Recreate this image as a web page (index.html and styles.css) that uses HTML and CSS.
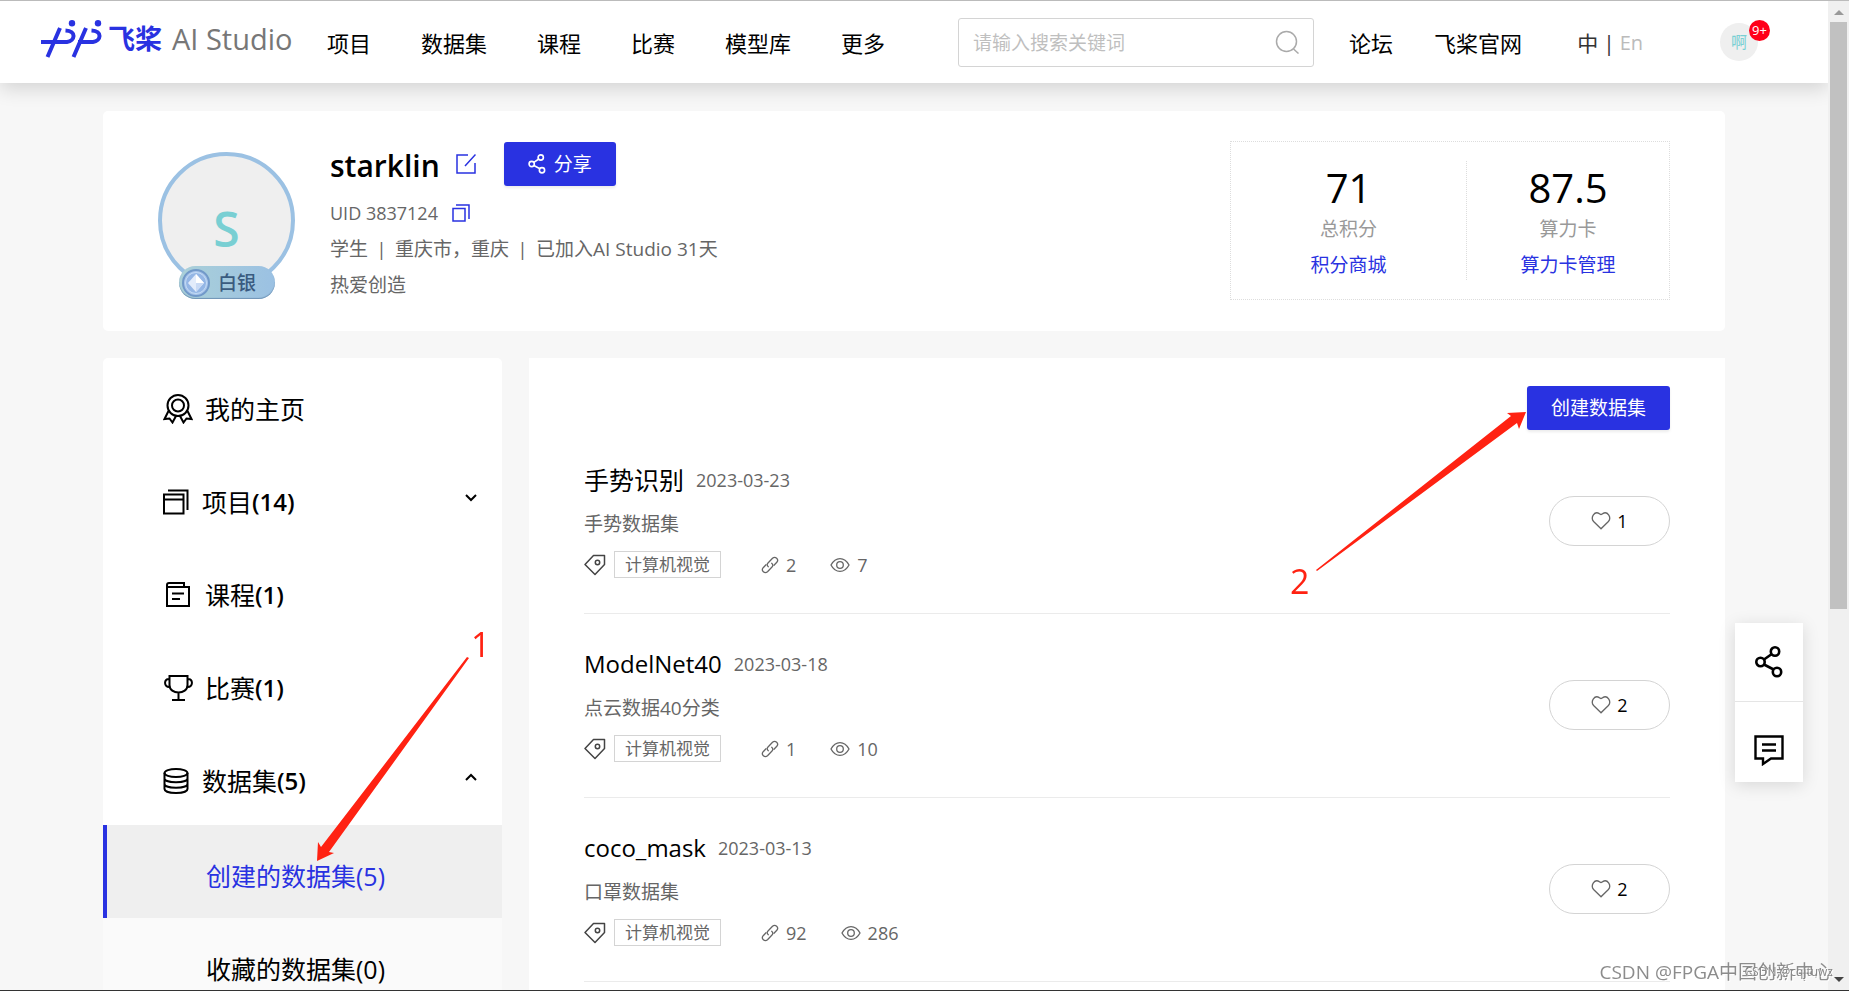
FILE: index.html
```html
<!DOCTYPE html>
<html lang="zh-CN">
<head>
<meta charset="utf-8">
<title>飞桨 AI Studio</title>
<link rel="stylesheet" href="styles.css">
</head>
<body>
<svg class="sprite" aria-hidden="true">
  <symbol id="i-share" viewBox="0 0 28 32"><g fill="none" stroke="currentColor" stroke-width="2.6"><circle cx="5.500" cy="16" r="4.200"/><circle cx="20" cy="5.500" r="4.200"/><circle cx="22" cy="26" r="4.200"/><path d="M9 13.500 16.800 8M9 18.500l9.700 5"/></g></symbol>
  <symbol id="i-tag" viewBox="0 0 22 22"><g fill="none" stroke="currentColor" stroke-width="1.500"><path d="M1 10.500 9.500 1.500H20.500v9L11 20.500Z" stroke-linejoin="round"/><circle cx="13.500" cy="8.500" r="2.200"/></g></symbol>
  <symbol id="i-link" viewBox="0 0 18 18"><g fill="none" stroke="currentColor" stroke-width="1.300" stroke-linecap="round"><path d="M7.300 10.700C5.800 9.500 6 8 7 7l4.500-4.700c2.800-2.500 6.800 1 4.300 4L13 9.200"/><path d="M10.700 7.300c1.500 1.200 1.300 2.700.3 3.700l-4.500 4.700c-2.800 2.500-6.800-1-4.300-4L5 8.800"/></g></symbol>
  <symbol id="i-eye" viewBox="0 0 20 16"><g fill="none" stroke="currentColor" stroke-width="1.300"><path d="M1 8c4.500-8.600 13.500-8.600 18 0-4.500 8.600-13.500 8.600-18 0Z"/><circle cx="10" cy="8" r="3.300"/></g></symbol>
  <symbol id="i-heart" viewBox="0 0 20 18"><path d="M10 16.800 2.600 9.500C-.8 5.500 3.500-1.300 8.300 1.600 9 2 9.500 2.500 10 2.500s1-.5 1.700-.9c4.800-2.900 9.100 3.900 5.700 7.900Z" fill="none" stroke="currentColor" stroke-width="1.300"/></symbol>
</svg>

<header class="topbar">
  <a class="logo" href="#">
    <svg class="logo-mark" viewBox="0 0 62 38" aria-hidden="true"><g fill="none" stroke="currentColor" stroke-width="4"><path d="M19 8 6.500 37M45 8 32.500 37"/><path d="M0 22H26C34 21 36 11 24.500 10.500M37 22H52C60 21 62 11 50.500 10.500"/></g><circle cx="31" cy="3.200" r="3.200" fill="currentColor"/><circle cx="57" cy="3.200" r="3.200" fill="currentColor"/></svg>
    <span class="logo-cn">飞桨</span>
    <span class="logo-en">AI Studio</span>
  </a>
  <nav class="nav">
    <a href="#">项目</a><a href="#">数据集</a><a href="#">课程</a><a href="#">比赛</a><a href="#">模型库</a><a href="#">更多</a>
  </nav>
  <form class="search">
    <input type="text" placeholder="请输入搜索关键词" aria-label="搜索">
    <button type="button" aria-label="搜索"><svg viewBox="0 0 24 24"><g fill="none" stroke="currentColor" stroke-width="1.500"><circle cx="11.500" cy="11.500" r="10"/><path d="m18.500 19 5 4.500"/></g></svg></button>
  </form>
  <nav class="nav2"><a href="#">论坛</a><a href="#">飞桨官网</a></nav>
  <div class="lang"><a href="#">中</a><span>|</span><a href="#" class="off">En</a></div>
  <a class="user" href="#">啊<span class="badge">9+</span></a>
</header>

<main class="page">
  <section class="profile">
    <div class="avatar">
      <span class="avatar-letter">S</span>
      <span class="rank">
        <svg viewBox="0 0 30 30" aria-hidden="true"><circle cx="15" cy="15" r="13" fill="#a9c4ea" stroke="#7199c9" stroke-width="2"/><circle cx="15" cy="15" r="10.500" fill="#94b6e5" stroke="#c4dcf5"/><path d="m15 6 8 9-8 9-8-9Z" fill="#e3ecfb"/><path d="m15 6 8 9h-8Z" fill="#fff"/><path d="m15 24 8-9h-8Z" fill="#c9daf5"/></svg>
        白银</span>
    </div>
    <div class="info">
      <div class="name-row">
        <h1>starklin</h1>
        <button class="icon-btn" type="button" aria-label="编辑"><svg class="edit" viewBox="0 0 20 20"><path d="M12 1H1v18h18V9M9 12 19.500.5" fill="none" stroke="currentColor" stroke-width="1.500"/></svg></button>
        <button class="btn share" type="button"><svg><use href="#i-share"/></svg>分享</button>
      </div>
      <p>UID 3837124 <button class="icon-btn" type="button" aria-label="复制"><svg class="copy" viewBox="0 0 18 18"><path d="M1 4.500h12V17H1ZM4 1h13v14" fill="none" stroke="currentColor" stroke-width="1.500"/></svg></button></p>
      <p><span>学生</span><i>|</i><span>重庆市，重庆</span><i>|</i><span>已加入AI Studio 31天</span></p>
      <p>热爱创造</p>
    </div>
    <div class="stats">
      <div class="stat wide"><strong>71</strong><span>总积分</span><a href="#">积分商城</a></div>
      <div class="stat"><strong>87.5</strong><span>算力卡</span><a href="#">算力卡管理</a></div>
    </div>
  </section>

  <div class="columns">
    <aside class="side">
      <a class="item" href="#"><svg viewBox="0 0 30 30"><g fill="none" stroke="currentColor" stroke-width="2"><circle cx="15" cy="11.500" r="10.500"/><circle cx="15" cy="11.500" r="6"/><path d="M5.500 17 1.500 25l5-.5 3 4 3.500-6.500M24.500 17l4 8-5-.5-3 4L17 22"/></g></svg>我的主页</a>
      <a class="item group" href="#"><svg viewBox="0 0 26 26"><path d="M1 5.500h19.500V24.500H1ZM1 10.500h19.500M5 1.500h19.500v19.500" fill="none" stroke="currentColor" stroke-width="2"/></svg>项目<b>(14)</b><svg class="chev" viewBox="0 0 12 8"><path d="m1 1 5 5 5-5" fill="none" stroke="currentColor" stroke-width="2"/></svg></a>
      <a class="item" href="#"><svg viewBox="0 0 30 30"><path d="M4 7v19h22V7H4V5q0-2 2-2h15v4M9 13.500h12M9 19h8" fill="none" stroke="currentColor" stroke-width="2"/></svg>课程<b>(1)</b></a>
      <a class="item" href="#"><svg viewBox="0 0 30 30"><path d="M6.500 3h18v9c0 10-18 10-18 0ZM6.500 6C.5 5 .5 15 7 14M24.500 6c6-1 6 9-.5 8M15.500 20v6M9 27h13" fill="none" stroke="currentColor" stroke-width="2"/></svg>比赛<b>(1)</b></a>
      <a class="item group" href="#"><svg viewBox="0 0 26 26"><g fill="none" stroke="currentColor" stroke-width="2"><ellipse cx="13" cy="5" rx="11.500" ry="4"/><path d="M1.500 5v16c0 5.300 23 5.300 23 0V5M1.500 10.500c0 5 23 5 23 0M1.500 16c0 5 23 5 23 0"/></g></svg>数据集<b>(5)</b><svg class="chev" viewBox="0 0 12 8"><path d="m1 7 5-5 5 5" fill="none" stroke="currentColor" stroke-width="2"/></svg></a>
      <a class="sub active" href="#">创建的数据集(5)</a>
      <a class="sub" href="#">收藏的数据集(0)</a>
    </aside>

    <section class="list">
      <div class="toolbar"><button class="btn" type="button">创建数据集</button></div>
      <article class="row">
        <div><h2><a href="#">手势识别</a><time>2023-03-23</time></h2><p>手势数据集</p>
          <div class="meta"><svg class="tag-i"><use href="#i-tag"/></svg><span class="tag">计算机视觉</span><span class="num"><svg class="link-i"><use href="#i-link"/></svg>2</span><span class="num"><svg class="eye-i"><use href="#i-eye"/></svg>7</span></div></div>
        <button class="like" type="button"><svg><use href="#i-heart"/></svg>1</button>
      </article>
      <article class="row">
        <div><h2><a class="latin" href="#">ModelNet40</a><time>2023-03-18</time></h2><p>点云数据40分类</p>
          <div class="meta"><svg class="tag-i"><use href="#i-tag"/></svg><span class="tag">计算机视觉</span><span class="num"><svg class="link-i"><use href="#i-link"/></svg>1</span><span class="num"><svg class="eye-i"><use href="#i-eye"/></svg>10</span></div></div>
        <button class="like" type="button"><svg><use href="#i-heart"/></svg>2</button>
      </article>
      <article class="row">
        <div><h2><a class="latin" href="#">coco_mask</a><time>2023-03-13</time></h2><p>口罩数据集</p>
          <div class="meta"><svg class="tag-i"><use href="#i-tag"/></svg><span class="tag">计算机视觉</span><span class="num"><svg class="link-i"><use href="#i-link"/></svg>92</span><span class="num"><svg class="eye-i"><use href="#i-eye"/></svg>286</span></div></div>
        <button class="like" type="button"><svg><use href="#i-heart"/></svg>2</button>
      </article>
    </section>
  </div>
</main>

<div class="float">
  <button type="button" aria-label="分享"><svg viewBox="0 0 28 32"><use href="#i-share"/></svg></button>
  <button type="button" aria-label="反馈"><svg viewBox="0 0 30 32"><path d="M1.500 2.500h27v22H17l-8 5.500v-5.500H1.500ZM8 10.500h14M8 16.500h14" fill="none" stroke="currentColor" stroke-width="2.400"/></svg></button>
</div>

<div class="scrollbar" aria-hidden="true"><span class="up"></span><span class="thumb"></span><span class="down"></span></div>

<svg class="marks" viewBox="0 0 1849 991" aria-hidden="true">
  <g fill="#ff2212">
    <path d="M467 657 469 658 329 852 334 853 317 861 318 842 321 847Z"/>
    <path d="M1316 570 1511 416 1507 413 1526 412 1519 429 1517 423 1317 571Z"/>
    <text x="471" y="657">1</text>
    <text x="1290" y="594">2</text>
  </g>
</svg>
<div class="credit">CSDN @FPGA中国创新中心</div>
<div class="credit small">CSDN @cqjtuwz</div>
</body>
</html>
```
FILE: styles.css
```css
* { box-sizing: border-box; }
body {
  margin: 0;
  height: 100vh;
  overflow: hidden;
  padding-right: 21px;
  background: #f7f7f7;
  border-top: 1px solid #bbb;
  border-bottom: 1px solid #333;
  color: #000;
  font: 19px/36px "Open Sans", "Noto Sans CJK SC", sans-serif;
}
a { color: inherit; text-decoration: none; }
button, input { font: inherit; }
button { border: 0; background: none; padding: 0; cursor: pointer; color: inherit; }
h1, h2, p { margin: 0; }
svg { flex: none; }
.sprite { position: absolute; width: 0; height: 0; }

.topbar {
  position: relative;
  display: flex;
  align-items: center;
  height: 82px;
  padding: 0 70px 0 41px;
  background: #fff;
  box-shadow: 0 6px 18px rgba(0, 0, 0, .14);
  font-size: 22px;
}
.logo { display: flex; align-items: center; width: 286px; padding-bottom: 6px; white-space: nowrap; }
.logo-mark { width: 62px; height: 38px; color: #2932e1; }
.logo-cn { margin-left: 5px; font-size: 27px; font-weight: 700; color: #2932e1; }
.logo-en { margin-left: 10px; font-size: 29px; color: #777; }
.nav { display: flex; gap: 50px; padding-top: 2px; }
.search {
  display: flex;
  align-items: center;
  width: 356px;
  height: 49px;
  margin-left: 73px;
  padding: 0 14px;
  border: 1px solid #d4d4d4;
  border-radius: 3px;
}
.search input { flex: 1; min-width: 0; border: 0; outline: 0; padding: 2px 0 0; font-size: 19px; background: none; }
.search input::placeholder { color: #bfbfbf; }
.search button { display: flex; color: #aaa; }
.search button svg { width: 24px; height: 24px; }
.nav2 { display: flex; gap: 41px; margin-left: 35px; padding-top: 2px; }
.lang { display: flex; gap: 5px; margin-left: 55px; padding-top: 2px; font-size: 21px; color: #333; }
.lang .off { color: #bbb; font-size: 20px; }
.user {
  position: relative;
  width: 38px;
  height: 38px;
  margin-left: auto;
  border-radius: 50%;
  background: #efefef;
  color: #79cfd3;
  font-size: 16px;
  line-height: 38px;
  text-align: center;
}
.badge {
  position: absolute;
  top: -3px;
  right: -12px;
  width: 21px;
  height: 21px;
  border-radius: 50%;
  background: #ff0019;
  color: #fff;
  font-size: 13px;
  line-height: 21px;
}

.page { padding: 28px 103px 0; }
.profile {
  display: flex;
  align-items: flex-start;
  height: 220px;
  padding: 30px 55px 0;
  border-radius: 5px;
  background: #fff;
}
.avatar {
  position: relative;
  width: 137px;
  height: 137px;
  margin-top: 11px;
  border: 4px solid #9bc1e3;
  border-radius: 50%;
  background: #efefef;
  text-align: center;
}
.avatar-letter { display: block; padding-top: 8px; color: #79cfd3; font-size: 48px; font-weight: 600; line-height: 130px; }
.rank {
  position: absolute;
  left: 17px;
  bottom: -14px;
  display: flex;
  align-items: center;
  gap: 7px;
  width: 96px;
  height: 33px;
  padding-left: 2px;
  border-radius: 17px;
  background: linear-gradient(90deg, #aad0d8, #9bc1e3);
  box-shadow: inset 0 -1px 1px #6f93b5;
  color: #3a5b80;
  font-weight: 500;
}
.rank svg { width: 30px; height: 30px; }
.info { margin-left: 35px; color: #666; }
.name-row { display: flex; align-items: center; height: 46px; margin-bottom: 8px; }
h1 { padding-top: 4px; color: #000; font-size: 30px; font-weight: 600; }
.icon-btn { display: inline-flex; color: #2932e1; }
.name-row .icon-btn { margin-left: 16px; }
.edit { width: 20px; height: 20px; }
.copy { width: 18px; height: 18px; }
.info p { display: flex; align-items: center; font-size: 19px; }
.info p:nth-child(2) { font-size: 18px; gap: 14px; }
.info i { width: 27px; font-style: normal; text-align: center; }
.btn {
  display: flex;
  align-items: center;
  justify-content: center;
  height: 44px;
  padding: 0 24px;
  border-radius: 3px;
  background: #2932e1;
  box-shadow: 0 2px 3px rgba(0, 0, 0, .08);
  color: #fff;
}
.share { gap: 8px; margin-left: 28px; }
.share svg { width: 18px; height: 20px; }
.stats {
  display: flex;
  align-items: center;
  width: 440px;
  height: 159px;
  margin-left: auto;
  border: 1px dotted #ddd;
}
.stat { display: flex; flex: 1; flex-direction: column; align-items: center; height: 119px; }
.stat.wide { flex: 0 0 236px; border-right: 1px dotted #ddd; }
.stat strong { padding-top: 4px; font-size: 40px; font-weight: 400; line-height: 46px; }
.stat span { color: #999; }
.stat a { color: #2932e1; }

.columns { display: flex; gap: 27px; margin-top: 27px; }
.side { width: 399px; padding-top: 2px; border-radius: 5px; background: #fff; font-size: 25px; }
.item { display: flex; align-items: center; height: 93px; padding: 4px 25px 0 60px; }
.item svg { width: 30px; height: 30px; margin-right: 12px; }
.item.group svg { width: 26px; height: 26px; margin-right: 13px; }
.item.group .chev { width: 12px; height: 8px; margin: 0 0 8px auto; }
.item b { font-size: 24px; font-weight: 600; }
.sub { display: block; height: 93px; padding-left: 99px; border-left: 4px solid #fafafa; background: #fafafa; line-height: 102px; }
.sub.active { border-color: #2932e1; background: #efefef; color: #2932e1; }

.list { flex: 1; padding: 28px 55px 0; background: #fff; }
.toolbar { display: flex; justify-content: flex-end; }
.row {
  display: flex;
  align-items: center;
  justify-content: space-between;
  height: 184px;
  padding-bottom: 2px;
  border-bottom: 1px solid #ebebeb;
}
.row h2 { display: flex; align-items: center; gap: 12px; height: 44px; font-size: 25px; font-weight: 400; }
.row h2 .latin { font-size: 24px; }
.row time { color: #666; font-size: 18px; }
.row p { height: 44px; color: #666; line-height: 44px; }
.meta { display: flex; align-items: center; height: 38px; color: #666; font-size: 18px; }
.tag-i { width: 22px; height: 22px; color: #444; }
.tag { height: 27px; margin: 0 6px 0 8px; padding: 0 10px; border: 1px solid #d4d4d4; font-size: 17px; line-height: 25px; }
.num { display: flex; align-items: center; gap: 7px; margin-left: 34px; }
.link-i { width: 18px; height: 18px; }
.eye-i { width: 20px; height: 16px; }
.like {
  display: flex;
  align-items: center;
  justify-content: center;
  gap: 6px;
  width: 121px;
  height: 50px;
  border: 1px solid #d4d4d4;
  border-radius: 25px;
  font-size: 18px;
}
.like svg { width: 20px; height: 18px; color: #666; }

.float {
  position: fixed;
  right: 46px;
  top: 623px;
  width: 68px;
  background: #fff;
  box-shadow: 0 3px 16px rgba(0, 0, 0, .13);
}
.float button { display: flex; align-items: center; justify-content: center; width: 68px; height: 78px; }
.float button + button { height: 81px; padding-top: 16px; border-top: 1px solid #e5e5e5; }
.float svg { width: 30px; height: 32px; }

.scrollbar {
  position: fixed;
  top: 1px;
  right: 0;
  bottom: 1px;
  display: flex;
  flex-direction: column;
  align-items: center;
  width: 21px;
  background: #f0f0f0;
}
.up { margin: 9px 0 7px; border: 5px solid transparent; border-top: 0; border-bottom-color: #999; }
.thumb { width: 17px; height: 587px; background: #c1c1c1; }
.down { margin: auto 0 8px; border: 5px solid transparent; border-bottom: 0; border-top-color: #444; }

.marks { position: fixed; left: 0; top: 0; width: 1849px; height: 991px; pointer-events: none; }
.marks text { font-size: 34px; }
.credit { position: fixed; right: 16px; bottom: 1px; color: #8c8c8c; font-size: 19px; white-space: nowrap; text-shadow: 1px 1px 0 #fff; }
.credit.small { color: #888; font-size: 12px; }
```
